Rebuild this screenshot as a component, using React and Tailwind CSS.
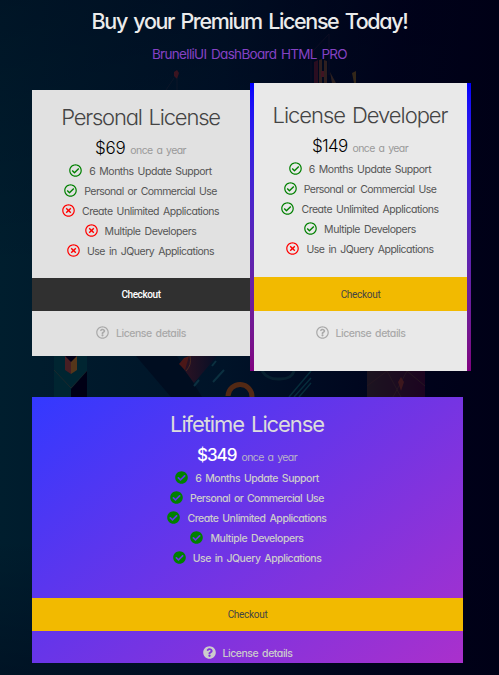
import React from "react";
import {
  FaCheckCircle,
  FaQuestionCircle,
  FaRegCheckCircle,
  FaRegQuestionCircle,
  FaRegTimesCircle,
} from "react-icons/fa";

const FEATURES = [
  ["6 Months Update Support", "tracking-[-0.47px]"],
  ["Personal or Commercial Use", "tracking-[-0.54px]"],
  ["Create Unlimited Applications", "tracking-[-0.47px]"],
  ["Multiple Developers", "tracking-[-0.44px]"],
  ["Use in JQuery Applications", "tracking-[-0.48px]"],
];

function Backdrop() {
  return (
    <svg className="absolute inset-0" width="499" height="675" viewBox="0 0 499 675" fill="none">
      <defs>
        <linearGradient id="sky" x1="0" y1="0" x2="1" y2="0">
          <stop offset="0" stopColor="#001e2e" />
          <stop offset="0.45" stopColor="#001328" />
          <stop offset="0.8" stopColor="#00031c" />
          <stop offset="1" stopColor="#000017" />
        </linearGradient>
        <linearGradient id="shade" x1="0" y1="0" x2="0" y2="1">
          <stop offset="0" stopColor="#000014" stopOpacity="0.3" />
          <stop offset="0.4" stopColor="#000014" stopOpacity="0" />
          <stop offset="0.8" stopColor="#000014" stopOpacity="0" />
          <stop offset="1" stopColor="#000014" stopOpacity="0.35" />
        </linearGradient>
        <linearGradient id="fin" x1="0" y1="0" x2="1" y2="0">
          <stop offset="0" stopColor="#301322" />
          <stop offset="1" stopColor="#060e26" />
        </linearGradient>
        <linearGradient id="box" x1="0" y1="0" x2="1" y2="0">
          <stop offset="0" stopColor="#1c1420" />
          <stop offset="1" stopColor="#1c0420" />
        </linearGradient>
      </defs>
      <rect width="499" height="675" fill="url(#sky)" />
      <rect width="499" height="675" fill="url(#shade)" />
      <path d="M311 83V53L329 34V75" stroke="#0d0d22" />
      <path d="M314 62l4-2v23h-4z" fill="#2a0d20" />
      <path d="M319 60l3-1v24h-3zM324 60l3 1v22h-3z" fill="#2f1f1f" />
      <path d="M321 71h3v6h-3z" fill="#3f1422" />
      <path d="M330 72l6 11h-4z" fill="#2c2020" />
      <path d="M352 73l4-2v12h-2z" fill="#332719" />
      <path d="M174 72l3-2 2 3-2 6-3-3z" fill="#3a1420" />
      <path d="M174 78l-8 12M177 78v12" stroke="#0c1628" />
      <path d="M54 356h33v41H54z" fill="#002531" />
      <path d="M54 370l17 18 16-17" stroke="#1a282c" />
      <path d="M71 389l16-18v26H71z" fill="#000015" />
      <path d="M65 356h6v18l-6-4z" fill="#471e23" />
      <path d="M71 356h6v14l-6 4z" fill="#55361a" />
      <path d="M65 356h12l-6 6z" fill="#000018" />
      <path d="M136 356h41l25 41h-31z" fill="#000d20" />
      <path d="M180 364l10-8h27l-23 27z" fill="url(#fin)" />
      <path d="M179 364l5-6 5-2-4 14z" fill="#4b1717" />
      <path d="M186 371q6-6 4-15" stroke="#4c2a20" />
      <path d="M228 396a12 12 0 0 1 24 1" stroke="#532914" strokeWidth="5" />
      <path d="M213 382l11-12M194 386l5-6M212 366l4-5" stroke="#0b3040" strokeWidth="2" />
      <path d="M289 397l22-26M294 397l17-19M299 397l12-14" stroke="#062c3b" strokeWidth="1.5" />
      <path d="M262 371q6 9 18 8 12 0 14-8" stroke="#07202f" strokeWidth="3" />
      <path d="M367 371h58v26h-58z" fill="url(#box)" />
      <path d="M367 386l20-15 14 26M425 386l-18-15-14 26" stroke="#251620" />
      <path d="M398 382l3-5 3 5-3 9z" fill="#3d171d" />
    </svg>
  );
}

function Icon({ kind }) {
  if (kind === "solid") return <FaCheckCircle className="size-[13px] shrink-0 text-[#008000]" />;
  if (kind === "yes") return <FaRegCheckCircle className="size-[13px] shrink-0 text-[#008000]" />;
  return <FaRegTimesCircle className="size-[13px] shrink-0 text-[#ff0000]" />;
}

function Plan({ title, titleClass, price, priceClass, noteClass, icons, textClass }) {
  return (
    <div className="mr-px flex flex-col items-center whitespace-nowrap">
      <h2 className={`h-[35px] text-[22px] leading-[34px] [word-spacing:2px] ${titleClass}`}>{title}</h2>
      <div className="flex h-[25px] items-baseline gap-[5px]">
        <span className={`text-[17px] leading-[27px] ${priceClass}`}>{price}</span>
        <span className={`text-[10.5px] tracking-[-0.6px] [word-spacing:1.5px] ${noteClass}`}>once a year</span>
      </div>
      <ul>
        {FEATURES.map(([label, tracking], i) => (
          <li key={label} className="flex h-5 items-center justify-center gap-[7px]">
            <Icon kind={icons[i]} />
            <span
              className={`pt-[3px] text-[10.5px] leading-[17px] [word-spacing:1.5px] ${tracking} ${textClass}`}
            >
              {label}
            </span>
          </li>
        ))}
      </ul>
    </div>
  );
}

function Details({ solid, className }) {
  const Mark = solid ? FaQuestionCircle : FaRegQuestionCircle;
  return (
    <div className={`flex items-center justify-center gap-[7px] whitespace-nowrap ${className}`}>
      <Mark className="size-[13px]" />
      <span className="pt-[3px] text-[10.5px] leading-[17px] font-medium tracking-[-0.46px] [word-spacing:1.5px]">
        License details
      </span>
    </div>
  );
}

export default function App() {
  return (
    <main className="relative h-[675px] w-[499px] overflow-hidden bg-[#00031c] font-['Inter',sans-serif] [font-feature-settings:'cv11']">
      <Backdrop />
      <div className="relative">
        <header className="flex h-[83px] flex-col items-center whitespace-nowrap">
          <h1 className="mt-[5px] h-8 text-[21.5px] leading-8 font-medium tracking-[-1.36px] text-[#ebebeb] [word-spacing:2px]">
            Buy your Premium License Today!
          </h1>
          <p className="mt-[7px] text-[13.5px] leading-5 tracking-[-0.68px] text-[#8542c4] [word-spacing:1.5px]">
            BrunelliUI DashBoard HTML PRO
          </p>
        </header>
        <div className="flex items-start pl-8">
          <section className="mt-[7px] h-[266px] w-[218px] bg-[#e1e1e1] pt-[10px]">
            <Plan
              title="Personal License"
              titleClass="font-light text-[#444] tracking-[-1.2px]"
              price="$69"
              priceClass="font-light text-black tracking-[-0.3px]"
              noteClass="text-[#999]"
              icons={["yes", "yes", "no", "no", "no"]}
              textClass="text-[#555]"
            />
            <button className="mt-[18px] block h-[33px] w-full bg-[#303030] font-['Roboto',sans-serif] text-[10px] font-medium tracking-[-0.4px] text-white">
              Checkout
            </button>
            <Details className="mt-[11px] text-[#a9a9a9]" />
          </section>
          <section className="w-[221px] bg-linear-to-b from-[#0000ff] to-[#800080] px-1">
            <div className="h-[288px] bg-[#e9e9e9] pt-[15px]">
              <Plan
                title="License Developer"
                titleClass="font-light text-[#444] tracking-[-1.05px]"
                price="$149"
                priceClass="font-light text-black tracking-[-0.7px]"
                noteClass="text-[#999]"
                icons={["yes", "yes", "yes", "yes", "no"]}
                textClass="text-[#555]"
              />
              <button className="mt-[19px] block h-[34px] w-full bg-[#f2ba00] font-['Roboto',sans-serif] text-[10px] tracking-[-0.3px] text-[#444]">
                Checkout
              </button>
              <Details className="mt-[11px] text-[#a9a9a9]" />
            </div>
          </section>
        </div>
        <section className="mt-[26px] ml-8 h-[266px] w-[431px] bg-linear-[142deg] from-[#3339ff] to-[#aa30cc] pt-[10px]">
          <Plan
            title="Lifetime License"
            titleClass="text-[#dcdcdc] tracking-[-1.1px]"
            price="$349"
            priceClass="font-medium text-white tracking-[-1px]"
            noteClass="text-[#b9b3c9]"
            icons={["solid", "solid", "solid", "solid", "solid"]}
            textClass="font-medium text-[#ccc]"
          />
          <button className="mt-[31px] block h-[33px] w-full bg-[#f2ba00] font-['Roboto',sans-serif] text-[10px] tracking-[-0.3px] text-[#444]">
            Checkout
          </button>
          <Details solid className="mt-[11px] text-[#ccc]" />
        </section>
      </div>
    </main>
  );
}
